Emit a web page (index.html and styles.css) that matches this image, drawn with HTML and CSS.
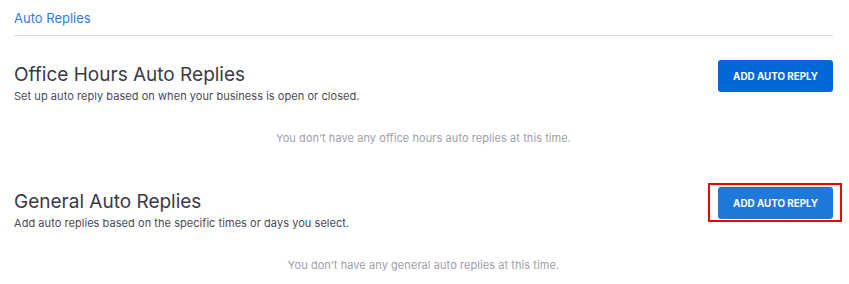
FILE: index.html
```html
<!DOCTYPE html>
<html>
<head>
<meta charset="utf-8">
<link rel="stylesheet" href="styles.css">
</head>
<body>
<div class="page">
  <div class="crumb"><a class="crumb-link" href="#">Auto Replies</a></div>
  <section class="section">
    <div class="section-head">
      <div class="section-text">
        <h2 class="section-title">Office Hours Auto Replies</h2>
        <p class="section-desc">Set up auto reply based on when your business is open or closed.</p>
      </div>
      <button class="btn">ADD AUTO REPLY</button>
    </div>
    <p class="empty">You don’t have any office hours auto replies at this time.</p>
  </section>
  <section class="section">
    <div class="section-head">
      <div class="section-text">
        <h2 class="section-title">General Auto Replies</h2>
        <p class="section-desc">Add auto replies based on the specific times or days you select.</p>
      </div>
      <div class="highlight"><button class="btn btn-hover">ADD AUTO REPLY</button></div>
    </div>
    <p class="empty">You don’t have any general auto replies at this time.</p>
  </section>
</div>
</body>
</html>
```

FILE: styles.css
```css
html, body {
  margin: 0;
  padding: 0;
  background: #ffffff;
}
body {
  font-family: Inter, "Noto Sans", sans-serif;
}
.page {
  padding: 0 16px 0 14px;
}
.crumb {
  height: 36px;
  border-bottom: 1px solid #dcdcdc;
  box-sizing: border-box;
  padding-top: 7px;
}
.crumb-link {
  font-size: 13px;
  line-height: 18px;
  color: #2f7de1;
  text-decoration: none;
}
.section {
  padding-top: 24px;
}
.section-head {
  display: flex;
  justify-content: space-between;
  align-items: flex-start;
}
.section-title {
  margin: 3px 0 0 0;
  font-size: 19px;
  line-height: 24px;
  font-weight: 400;
  color: #3a3a48;
}
.section-desc {
  margin: 2px 0 0 0;
  font-size: 11px;
  line-height: 14px;
  letter-spacing: 0.05px;
  color: #4a4a55;
}
.btn {
  width: 115px;
  height: 32px;
  border: 0;
  border-radius: 3px;
  background: #0067d8;
  color: #ffffff;
  font-family: Inter, "Noto Sans", sans-serif;
  font-size: 9.8px;
  font-weight: 700;
  padding: 0;
  cursor: pointer;
}
.btn-hover {
  background: #1f79d9;
}
.highlight {
  position: relative;
}
.highlight::after {
  content: "";
  position: absolute;
  left: -10px;
  top: -4px;
  right: -9px;
  bottom: -3px;
  border: 2px solid #ee0000;
}
.empty {
  margin: 28px 0 18px 0;
  text-align: center;
  font-size: 11px;
  line-height: 14px;
  letter-spacing: 0.07px;
  color: #a0a0aa;
}
```
